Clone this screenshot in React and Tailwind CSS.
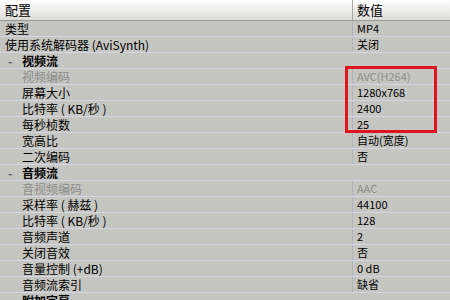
import React from 'react';

const rows = [
    { k: '类型', v: 'MP4', lvl: 0 },
    { k: '使用系统解码器 (AviSynth)', v: '关闭', lvl: 0 },
    { k: '视频流', group: true },
    { k: '视频编码', v: 'AVC(H264)', lvl: 1, dim: true },
    { k: '屏幕大小', v: '1280x768', lvl: 1 },
    { k: '比特率 ( KB/秒 )', v: '2400', lvl: 1 },
    { k: '每秒桢数', v: '25', lvl: 1 },
    { k: '宽高比', v: '自动(宽度)', lvl: 1 },
    { k: '二次编码', v: '否', lvl: 1 },
    { k: '音频流', group: true },
    { k: '音视频编码', v: 'AAC', lvl: 1, dim: true },
    { k: '采样率 ( 赫兹 )', v: '44100', lvl: 1 },
    { k: '比特率 ( KB/秒 )', v: '128', lvl: 1 },
    { k: '音频声道', v: '2', lvl: 1 },
    { k: '关闭音效', v: '否', lvl: 1 },
    { k: '音量控制 (+dB)', v: '0 dB', lvl: 1 },
    { k: '音频流索引', v: '缺省', lvl: 1 },
    { k: '附加字幕', group: true },
];

const font = { fontFamily: '"Noto Sans CJK SC", "Liberation Sans", sans-serif' };

export default function App() {
    return (
        <div className="relative w-[450px] h-[300px] overflow-hidden bg-[#c5c5c1] text-black" style={font}>
            <div className="flex h-[21px] border-b border-[#9a9a96] bg-gradient-to-b from-white to-[#dcdcd8] text-[13px] leading-[20px]">
                <div className="w-[353px] pl-[5px] border-r border-[#a8a8a4]">配置</div>
                <div className="flex-1 pl-[4px]">数值</div>
            </div>

            {rows.map((r, i) =>
                r.group ? (
                    <div key={i} className="flex items-center h-[16px] border-b border-[#d6d6e2] text-[12px] leading-[15px]">
                        <span className="w-[22px] pl-[8px] text-[#5a5a70] font-bold">-</span>
                        <span className="font-bold">{r.k}</span>
                    </div>
                ) : (
                    <div key={i} className="flex h-[16px] border-b border-[#d6d6e2] text-[12px] leading-[15px]">
                        <div className={`w-[353px] border-r border-[#b4b4c0] ${r.lvl ? 'pl-[22px]' : 'pl-[5px]'} ${r.dim ? 'text-[#8c8c8c]' : ''}`}>
                            {r.k}
                        </div>
                        <div className={`flex-1 pl-[4px] text-[11px] ${r.dim ? 'text-[#8c8c8c]' : ''}`}>{r.v}</div>
                    </div>
                )
            )}

            <div className="absolute left-[345px] top-[66px] w-[92px] h-[67px] border-[3px] border-[#e0141e]" />
        </div>
    );
}
